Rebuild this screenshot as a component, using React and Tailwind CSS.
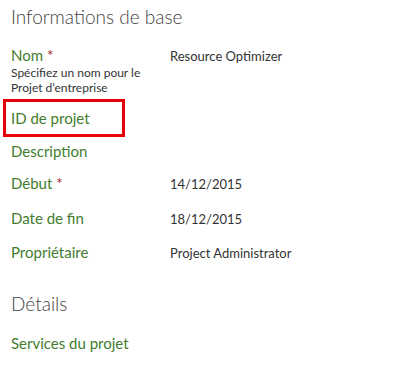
import React from "react";

const rows = [
  { label: "Début", required: true, value: "14/12/2015", h: "h-[35px]" },
  { label: "Date de fin", value: "18/12/2015", h: "h-[35px]" },
  { label: "Propriétaire", value: "Project Administrator", h: "h-[34px]" },
];

const Label = ({ children, required }) => (
  <div className="text-[15px] text-[#437c2e] leading-5">
    {children}
    {required && <span className="text-[#a4262c]"> *</span>}
  </div>
);

export default function App() {
  return (
    <div
      className="w-[398px] h-[374px] bg-white overflow-hidden text-[#333] leading-5"
      style={{ fontFamily: 'Lato, "Open Sans", sans-serif' }}
    >
      <div className="pl-[11px] pt-[3px]">
        <h2 className="text-[19px] font-light text-[#444] leading-7">
          Informations de base
        </h2>

        <div className="mt-[14px] flex">
          <div className="w-[159px]">
            <Label required>Nom</Label>
            <p className="w-[140px] text-[12px] leading-[15px] text-[#333]">
              Spécifiez un nom pour le Projet d’entreprise
            </p>
          </div>
          <div className="text-[13px] leading-5 pt-[1px]">Resource Optimizer</div>
        </div>

        <div className="-ml-[8px] mt-[4px] w-[122px] h-[38px] border-[3px] border-[#e8000b] flex items-center pl-[5px]">
          <Label>ID de projet</Label>
        </div>

        <div className="h-[28px] flex items-center">
          <Label>Description</Label>
        </div>

        {rows.map((r) => (
          <div key={r.label} className={`${r.h} flex items-center`}>
            <div className="w-[159px]">
              <Label required={r.required}>{r.label}</Label>
            </div>
            <div className="text-[13px] leading-5 pt-[2px]">{r.value}</div>
          </div>
        ))}

        <h2 className="mt-[21px] text-[19px] font-light text-[#444] leading-7">
          Détails
        </h2>
        <div className="mt-[15px]">
          <Label>Services du projet</Label>
        </div>
      </div>
    </div>
  );
}
